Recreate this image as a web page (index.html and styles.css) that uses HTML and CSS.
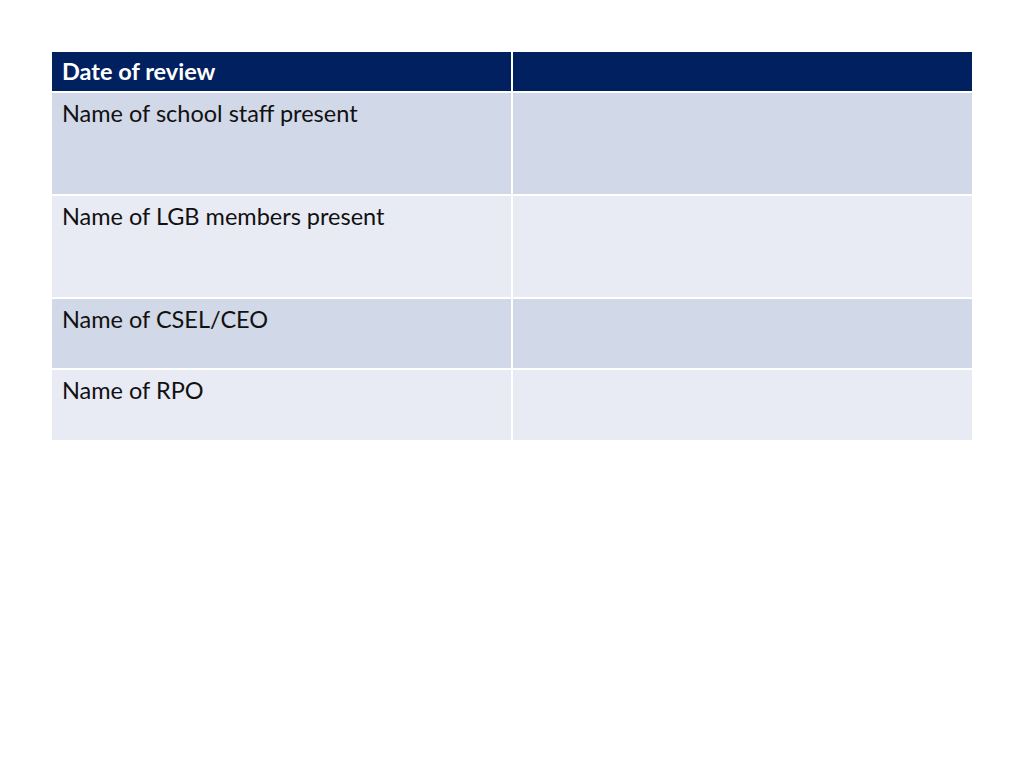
FILE: index.html
```html
<!DOCTYPE html>
<html>
<head>
<meta charset="utf-8">
<link rel="stylesheet" href="styles.css">
</head>
<body>
<div class="sheet">
  <div class="grid">
    <div class="cell head">Date of review</div>
    <div class="cell head"></div>
    <div class="cell odd">Name of school staff present</div>
    <div class="cell odd"></div>
    <div class="cell even">Name of LGB members present</div>
    <div class="cell even"></div>
    <div class="cell odd">Name of CSEL/CEO</div>
    <div class="cell odd"></div>
    <div class="cell even">Name of RPO</div>
    <div class="cell even"></div>
  </div>
</div>
</body>
</html>
```
FILE: styles.css
```css
html, body {
  margin: 0;
  padding: 0;
  background: #ffffff;
}
.sheet {
  width: 1024px;
  height: 768px;
  padding: 52px 52px 0 52px;
  box-sizing: border-box;
}
.grid {
  display: grid;
  grid-template-columns: 459px 459px;
  grid-template-rows: 39px 101px 101px 69px 70px;
  column-gap: 2px;
  row-gap: 2px;
  width: 920px;
  font-family: Lato, "Liberation Sans", sans-serif;
  font-size: 23.5px;
}
.cell {
  padding: 6px 10px 0 10px;
  box-sizing: border-box;
  color: #111111;
  line-height: 28px;
}
.head {
  background: #002060;
  color: #ffffff;
  font-weight: bold;
  padding-top: 5px;
}
.odd {
  background: #d1d8e7;
}
.even {
  background: #e8ebf4;
}
```
